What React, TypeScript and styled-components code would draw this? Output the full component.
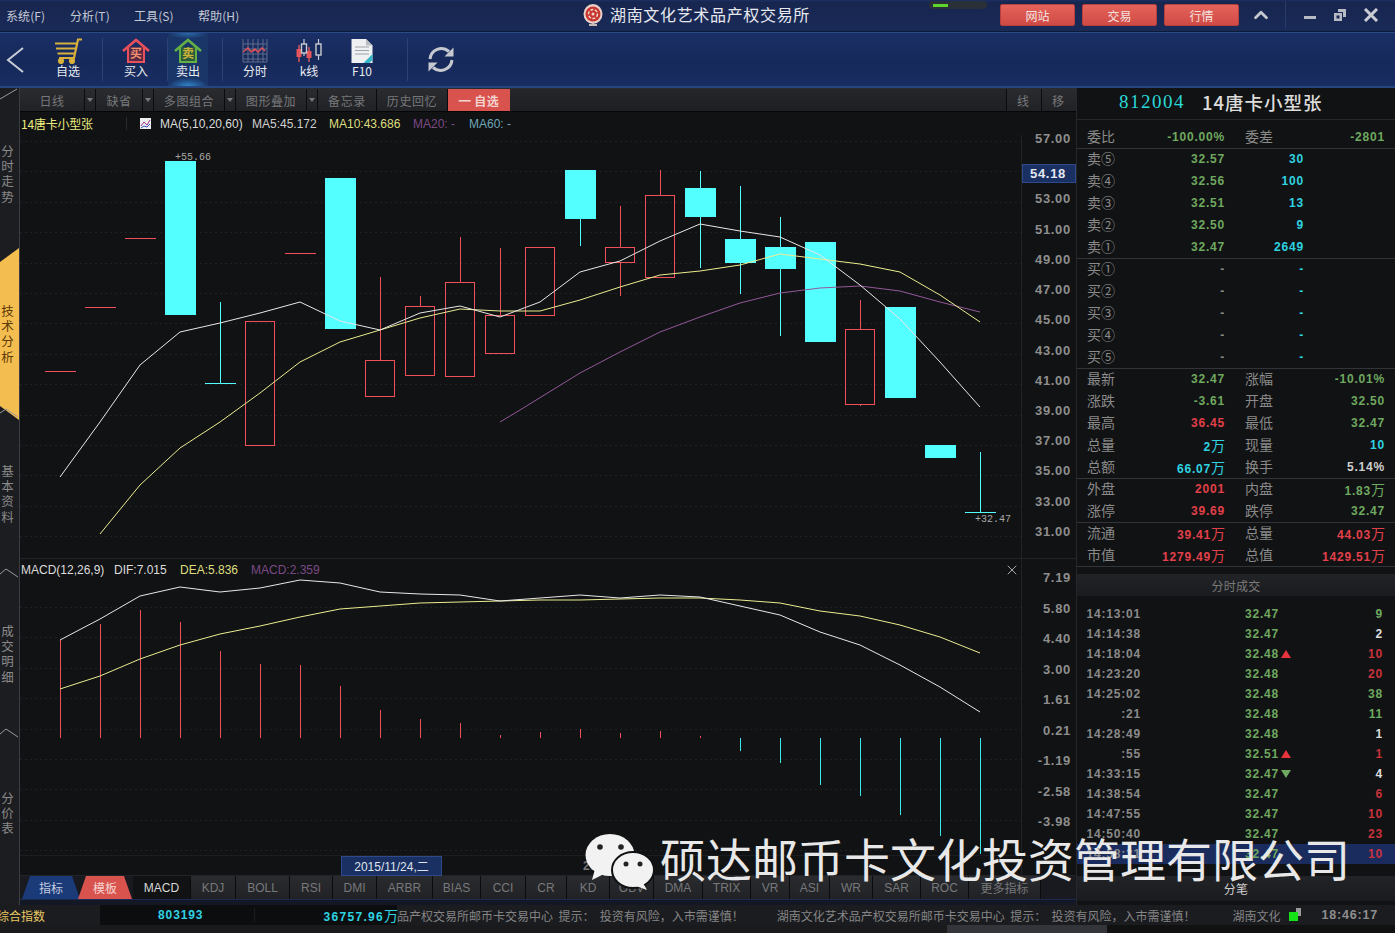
import React from "react";
import styled, { createGlobalStyle } from "styled-components";
import { X as XIcon, ChevronUp } from "lucide-react";

const CJK = `"Noto Sans CJK SC", "Liberation Sans", sans-serif`;
const LATIN = `"Liberation Sans", "Noto Sans CJK SC", sans-serif`;
const MONO = `"Liberation Mono", "Noto Sans CJK SC", monospace`;
const GREEN = "#6fa860";
const RED = "#e2404a";
const CYAN = "#2fd3e2";

const Global = createGlobalStyle`
  html, body { margin: 0; padding: 0; background: #111; overflow: hidden; }
  * { box-sizing: border-box; }
`;

const Page = styled.div`
  position: relative;
  width: 1395px;
  height: 933px;
  overflow: hidden;
  display: flex;
  flex-direction: column;
  background: #111213;
  font-family: ${CJK};
`;

/* ---------- title bar ---------- */
const TitleBar = styled.header`
  height: 32px;
  flex: none;
  display: flex;
  align-items: center;
  padding-bottom: 1px;
  background: linear-gradient(#1c2f63 0, #17264f 8%, #1a2a58 100%);
  border-bottom: 1px solid #0c1a3a;
  position: relative;
`;
const Menu = styled.nav`
  width: 583px;
  flex: none;
  display: flex;
  padding-left: 6px;
  gap: 23px;
`;
const MenuItem = styled.span`
  font-size: 12px;
  color: #c4c9d4;
  width: 41px;
  white-space: nowrap;
  letter-spacing: 0.1px;
`;
const BrandLogo = styled.svg`
  width: 20px;
  height: 24px;
  flex: none;
`;
const BrandTitle = styled.h1`
  margin: 0 0 2px 7px;
  font-size: 16px;
  font-weight: 400;
  letter-spacing: 0.67px;
  color: #e6e8ee;
  white-space: nowrap;
  width: 319px;
`;
const Meter = styled.div`
  position: absolute;
  left: 929px;
  top: 1px;
  width: 58px;
  height: 8px;
  border-radius: 4px;
  background: #2a3038;
  padding: 2.5px 4px;
`;
const MeterFill = styled.div`
  width: 15px;
  height: 3px;
  background: #5fd62e;
`;
const WebButtons = styled.div`
  margin-left: 71px;
  display: flex;
  gap: 7px;
`;
const RedButton = styled.button`
  width: 75px;
  height: 22px;
  border: 1px solid #b5403d;
  border-radius: 2px;
  padding: 0;
  background: linear-gradient(#e5635a, #cf4a45);
  color: #f3e3e0;
  font-family: ${CJK};
  font-size: 12px;
`;
const WindowControls = styled.div`
  display: flex;
  align-items: center;
  gap: 15px;
  margin-left: 11px;
  color: #c4c8cf;
`;
const ControlDivider = styled.span`
  width: 1px;
  height: 28px;
  background: #2a3a68;
  margin: 0 2px 0 -2px;
`;

/* ---------- tool bar ---------- */
const ToolBar = styled.div`
  height: 56px;
  flex: none;
  display: flex;
  align-items: stretch;
  background: linear-gradient(#1a2f66 0, #16295a 55%, #182d62 100%);
  border-top: 1px solid #2a4a88;
  border-bottom: 2px solid #27467f;
`;
const BackButton = styled.div`
  width: 45px;
  flex: none;
  display: flex;
  align-items: center;
  padding: 0 0 0 6px;
`;
const ToolItem = styled.div<{ $w: number; $active?: boolean }>`
  width: ${(p) => p.$w}px;
  flex: none;
  display: flex;
  flex-direction: column;
  align-items: center;
  justify-content: flex-start;
  padding-top: 5px;
  color: #e8eaf0;
  font-size: 12px;
  line-height: 14px;
  background: ${(p) =>
    p.$active
      ? "radial-gradient(ellipse 20px 8px at 50% 100%, #2f86c8 0, transparent 100%), radial-gradient(ellipse 20px 6px at 50% 0, #2a6aa8 0, transparent 100%), #1a3568"
      : "transparent"};
`;
const ToolIcon = styled.svg`
  display: block;
  height: 26px;
  width: 30px;
  flex: none;
`;
const ToolSep = styled.div<{ $ml?: number; $mr?: number }>`
  width: 1px;
  flex: none;
  margin: 5px ${(p) => p.$mr ?? 0}px 5px ${(p) => p.$ml ?? 0}px;
  background: #2b4275;
`;
const RefreshWrap = styled.div`
  width: 66px;
  flex: none;
  display: flex;
  align-items: center;
  justify-content: center;
`;

/* ---------- body ---------- */
const Body = styled.div`
  height: 817px;
  flex: none;
  display: flex;
`;
const Rail = styled.aside`
  width: 20px;
  flex: none;
  padding-top: 7px;
  background: #1c1d21;
  border-right: 1px solid #3c3d42;
  display: flex;
  flex-direction: column;
`;
const RailSection = styled.div<{ $active?: boolean }>`
  position: relative;
  height: 160px;
  flex: none;
  display: flex;
  align-items: center;
  font-size: 12.5px;
  color: ${(p) => (p.$active ? "#5c3a06" : "#8a8a8a")};
  &::before {
    content: "";
    display: ${(p) => (p.$active ? "block" : "none")};
    position: absolute;
    left: 0;
    right: 0;
    top: -7px;
    bottom: -5px;
    background: #f4bd50;
    clip-path: polygon(0 14px, 100% 0, 100% 100%, 0 calc(100% - 14px));
  }
`;
const RailText = styled.span`
  position: relative;
  width: 14px;
  writing-mode: vertical-rl;
  letter-spacing: 2.7px;
  line-height: 14px;
`;
const Notch = styled.svg<{ $top: number }>`
  position: absolute;
  left: 0;
  top: ${(p) => p.$top}px;
  width: 19px;
  height: 14px;
`;

const Center = styled.main`
  width: 1057px;
  flex: none;
  display: flex;
  flex-direction: column;
  border-right: 1px solid #26272a;
`;
const TabBar = styled.div`
  height: 24px;
  flex: none;
  display: flex;
  background: #202124;
  border-top: 1px solid #2a2b2e;
  border-bottom: 1px solid #060606;
`;
const TopTab = styled.div<{ $w: number }>`
  width: ${(p) => p.$w}px;
  flex: none;
  display: flex;
  align-items: center;
  justify-content: center;
  font-size: 12px;
  color: #77787b;
  letter-spacing: 0.6px;
  background: linear-gradient(#2a2b2e, #212225);
  border-right: 1px solid #0b0b0c;
`;
const TabDrop = styled.div`
  width: 11px;
  flex: none;
  display: flex;
  align-items: center;
  justify-content: center;
  background: linear-gradient(#2a2b2e, #212225);
  border-right: 1px solid #0b0b0c;
  &::after {
    content: "";
    border-top: 4px solid #77787b;
    border-left: 3px solid transparent;
    border-right: 3px solid transparent;
  }
`;
const SelfTab = styled.div`
  width: 62px;
  flex: none;
  display: flex;
  align-items: center;
  justify-content: center;
  font-size: 12px;
  font-weight: 700;
  color: #f3d4d0;
  letter-spacing: 0.5px;
  background: #d9534e;
`;
const TabFiller = styled.div`
  flex: 1;
  background: linear-gradient(#252629, #1e1f22);
`;
const SideTab = styled.div<{ $w: number }>`
  width: ${(p) => p.$w}px;
  flex: none;
  display: flex;
  align-items: center;
  justify-content: center;
  font-size: 12px;
  padding-right: 2px;
  color: #77787b;
  background: linear-gradient(#2a2b2e, #212225);
  border-left: 1px solid #0b0b0c;
`;

const LegendRow = styled.div`
  height: 23px;
  flex: none;
  display: flex;
  align-items: center;
  font-family: ${LATIN};
  font-size: 12px;
`;
const StockTag = styled.span`
  margin-left: 1px;
  width: 106px;
  color: #ecec80;
  white-space: nowrap;
  border-right: 1px solid #2a2a2a;
  line-height: 13px;
  letter-spacing: -0.2px;
  font-family: ${CJK};
`;
const LegendIcon = styled.svg`
  margin-left: 13px;
  width: 11px;
  height: 11px;
  margin-right: 9px;
`;
const LegendText = styled.span<{ $c: string; $w: number }>`
  color: ${(p) => p.$c};
  width: ${(p) => p.$w}px;
  flex: none;
  white-space: nowrap;
`;
const Pane = styled.section<{ $h: number }>`
  height: ${(p) => p.$h}px;
  flex: none;
  display: flex;
  border-bottom: 1px solid #222326;
`;
const PlotColumn = styled.div`
  width: 1001px;
  flex: none;
  display: flex;
  flex-direction: column;
`;
const Plot = styled.svg<{ $h: number }>`
  display: block;
  width: 1001px;
  height: ${(p) => p.$h}px;
  flex: none;
`;
const Axis = styled.div<{ $pt: number; $pb: number }>`
  position: relative;
  width: 54px;
  flex: none;
  border-left: 1px solid #222326;
  padding: ${(p) => p.$pt}px 4px ${(p) => p.$pb}px 0;
  display: flex;
  flex-direction: column;
  justify-content: space-between;
  align-items: flex-end;
  font-family: ${LATIN};
  font-weight: 700;
  font-size: 13px;
  letter-spacing: 0.7px;
  line-height: 8px;
  color: #8e8e8e;
`;
const PriceTag = styled.span`
  position: absolute;
  left: 0;
  top: 29px;
  width: 54px;
  height: 19px;
  display: flex;
  align-items: center;
  justify-content: center;
  padding-right: 2px;
  background: #1a2f62;
  border: 1px solid #2e4a8a;
  color: #e6e8f0;
`;
const MacdLegend = styled.div`
  height: 20px;
  flex: none;
  display: flex;
  align-items: center;
  font-family: ${LATIN};
  font-size: 12px;
  color: #ddd;
  padding: 2px 0 0 1px;
`;
const CloseBox = styled.span`
  margin-left: auto;
  margin-right: 1px;
  display: flex;
  color: #b5b5b5;
`;
const DateRow = styled.div`
  height: 20px;
  flex: none;
  position: relative;
  display: flex;
  align-items: center;
  font-family: ${LATIN};
  font-weight: 700;
  font-size: 12px;
  color: #777;
  border-top: 1px solid #1c1d20;
`;
const DateBox = styled.span`
  margin-left: 321px;
  width: 101px;
  height: 20px;
  display: flex;
  align-items: center;
  justify-content: center;
  background: #1a2f62;
  border: 1px solid #2e4a8a;
  color: #dfe3ec;
  font-family: ${LATIN};
  font-weight: 400;
`;
const DateLabel = styled.span`
  margin-left: 141px;
`;
const IndicatorBar = styled.div`
  height: 24px;
  flex: none;
  display: flex;
  padding-left: 2px;
  background: #181a20;
  border-bottom: 1px solid #1b2a52;
`;
const Trapezoid = styled.div<{ $bg: string; $c: string; $w: number; $ml?: number }>`
  width: ${(p) => p.$w}px;
  margin-left: ${(p) => p.$ml ?? 0}px;
  margin-right: ${(p) => (p.$ml ? 1 : 0)}px;
  flex: none;
  display: flex;
  align-items: center;
  justify-content: center;
  font-size: 12px;
  color: ${(p) => p.$c};
  background: ${(p) => p.$bg};
  clip-path: polygon(8px 0, calc(100% - 8px) 0, 100% 100%, 0 100%);
`;
const IndicatorTab = styled.div<{ $w: number; $active?: boolean }>`
  width: ${(p) => p.$w}px;
  flex: none;
  display: flex;
  align-items: center;
  justify-content: center;
  font-family: ${LATIN};
  font-size: 12px;
  color: ${(p) => (p.$active ? "#d8d8d8" : "#77787b")};
  background: ${(p) => (p.$active ? "#111213" : "linear-gradient(#2a2b2e, #212225)")};
  border-right: 1px solid #0b0b0c;
`;
const BarGap = styled.div`
  height: 5px;
  flex: none;
  background: #141824;
`;

/* ---------- side panel ---------- */
const Side = styled.aside`
  width: 318px;
  flex: none;
  display: flex;
  flex-direction: column;
  background: #111213;
`;
const StockHeader = styled.div`
  height: 32px;
  flex: none;
  display: flex;
  align-items: center;
  padding: 0 0 4px 42px;
  border-bottom: 1px solid #26272a;
  margin-bottom: 6px;
`;
const StockCode = styled.span`
  font-family: "Liberation Serif", serif;
  font-size: 19px;
  letter-spacing: 1.5px;
  color: #2bd8d8;
  margin-right: 17px;
`;
const StockName = styled.span`
  font-size: 18.5px;
  letter-spacing: 1px;
  font-weight: 500;
  color: #dcdcdc;
  white-space: nowrap;
`;
const Group = styled.div`
  box-shadow: 0 1px 0 #333437;
  &:last-of-type {
    box-shadow: none;
  }
`;
const Quote = styled.div`
  height: 22px;
  display: grid;
  grid-template-columns: 138px 140px;
  column-gap: 20px;
  padding-left: 10px;
  align-items: center;
  font-family: ${LATIN};
  font-weight: 700;
  font-size: 12px;
  letter-spacing: 0.8px;
`;
const QuoteCell = styled.div`
  display: flex;
  justify-content: space-between;
  align-items: center;
  white-space: nowrap;
`;
const Label = styled.span`
  font-family: ${CJK};
  font-weight: 400;
  font-size: 14px;
  letter-spacing: 0;
  color: #8a8a8a;
  line-height: 16px;
  margin-bottom: 2px;
`;
const Val = styled.span<{ $c: string }>`
  color: ${(p) => p.$c};
`;
const BookCell = styled.div`
  width: 59px;
  text-align: right;
`;
const Unit = styled.span`
  font-family: ${CJK};
  font-weight: 400;
  font-size: 14px;
  letter-spacing: 0;
`;
const SideBar = styled.div<{ $mt: number; $h: number; $c: string }>`
  height: ${(p) => p.$h}px;
  margin-top: ${(p) => p.$mt}px;
  flex: none;
  display: flex;
  align-items: center;
  justify-content: center;
  background: linear-gradient(#222326, #1a1b1e);
  color: ${(p) => p.$c};
  font-size: 12px;
  letter-spacing: 0.2px;
`;
const Trades = styled.div`
  padding-top: 8px;
`;
const Trade = styled.div<{ $hi?: boolean }>`
  height: 20px;
  display: grid;
  grid-template-columns: 64px 168px 74px;
  align-items: center;
  font-family: ${LATIN};
  font-weight: 700;
  font-size: 12px;
  letter-spacing: 0.8px;
  background: ${(p) => (p.$hi ? "#1a2c5e" : "transparent")};
`;
const TradeTime = styled.span`
  text-align: right;
  color: #8a8a8a;
`;
const TradePrice = styled.span`
  padding-left: 104px;
  color: ${GREEN};
  display: flex;
  align-items: center;
  gap: 2px;
  white-space: nowrap;
`;
const Arrow = styled.i<{ $up: boolean }>`
  width: 0;
  height: 0;
  border-left: 5px solid transparent;
  border-right: 5px solid transparent;
  border-${(p) => (p.$up ? "bottom" : "top")}: 8px solid ${(p) => (p.$up ? "#e8333c" : GREEN)};
`;
const TradeQty = styled.span<{ $c: string }>`
  text-align: right;
  color: ${(p) => p.$c};
`;

/* ---------- status bar ---------- */
const StatusBar = styled.footer`
  height: 20px;
  flex: none;
  display: flex;
  align-items: center;
  background: #1b1c20;
  font-size: 12px;
  color: #858585;
  white-space: nowrap;
`;
const IndexName = styled.span`
  width: 100px;
  flex: none;
  margin-left: -3px;
  margin-right: 3px;
  color: #e8c860;
`;
const Pill = styled.div`
  width: 297px;
  height: 20px;
  flex: none;
  display: flex;
  align-items: center;
  background: #0c0d0f;
  color: ${CYAN};
  font-family: ${LATIN};
  font-weight: 700;
  font-size: 12px;
  letter-spacing: 0.9px;
`;
const PillNum = styled.span`
  margin-left: 58px;
  width: 97px;
  border-right: 1px solid #1c1d20;
`;
const PillAmount = styled.span`
  margin-left: auto;
  margin-right: -1px;
  letter-spacing: 1.3px;
`;
const Ticker = styled.span`
  white-space: pre;
  flex: none;
`;
const TickerGap = styled.span`
  width: 33px;
  flex: none;
`;
const StatusEnd = styled.div`
  margin-left: auto;
  display: flex;
  align-items: center;
  padding-right: 17px;
`;
const SignalIcon = styled.svg`
  width: 12px;
  height: 14px;
  margin: 0 21px 0 8px;
`;
const Clock = styled.span`
  font-family: ${LATIN};
  font-weight: 700;
  font-size: 12.5px;
  color: #8e8e8e;
  letter-spacing: 0.8px;
`;
const BottomStrip = styled.div`
  flex: 1;
  background: linear-gradient(90deg, #1a1a1c 0, #1a1a1c 947px, #34353a 947px, #34353a 1107px, #111 1107px);
`;

/* ---------- watermark ---------- */
const Watermark = styled.div`
  position: absolute;
  left: 585px;
  top: 833px;
  display: flex;
  align-items: flex-start;
  gap: 6px;
  pointer-events: none;
`;
const WechatMark = styled.svg`
  width: 69px;
  height: 58px;
  flex: none;
`;
const WatermarkText = styled.span`
  font-family: ${CJK};
  font-size: 46px;
  line-height: 58px;
  margin-top: -5px;
  color: #e8e8e8;
  white-space: nowrap;
  font-weight: 400;
`;

/* ---------- data ---------- */
type Candle = { x: number; top?: number; bot?: number; hi?: number; lo?: number; up: boolean };
const candles: Candle[] = [
  { x: 60, hi: 371, lo: 371, up: true },
  { x: 100, hi: 307, lo: 307, up: true },
  { x: 140, hi: 238, lo: 238, up: true },
  { x: 180, top: 161, bot: 315, up: false },
  { x: 220, hi: 302, lo: 383, up: false },
  { x: 260, top: 321, bot: 445, up: true },
  { x: 300, hi: 253, lo: 253, up: true },
  { x: 340, top: 178, bot: 329, up: false },
  { x: 380, top: 360, bot: 396, hi: 277, up: true },
  { x: 420, top: 306, bot: 375, hi: 296, up: true },
  { x: 460, top: 282, bot: 376, hi: 237, up: true },
  { x: 500, top: 315, bot: 353, hi: 248, up: true },
  { x: 540, top: 247, bot: 315, up: true },
  { x: 580, top: 170, bot: 219, lo: 246, up: false },
  { x: 620, top: 247, bot: 262, hi: 206, lo: 296, up: true },
  { x: 660, top: 195, bot: 277, hi: 170, up: true },
  { x: 700, top: 188, bot: 217, hi: 171, lo: 268, up: false },
  { x: 740, top: 239, bot: 263, hi: 186, lo: 294, up: false },
  { x: 780, top: 247, bot: 269, hi: 217, lo: 336, up: false },
  { x: 820, top: 242, bot: 342, up: false },
  { x: 860, top: 329, bot: 404, hi: 300, lo: 406, up: true },
  { x: 900, top: 307, bot: 398, up: false },
  { x: 940, top: 445, bot: 458, up: false },
  { x: 980, hi: 452, lo: 512, up: false },
];
const MA5 = "60,477 100,422 140,365 180,332 220,323 260,313 300,302 340,321 380,330 420,313 460,306 500,317 540,302 580,272 620,261 660,241 700,224 740,231 780,237 820,255 860,285 900,319 940,362 980,407";
const MA10 = "100,534 140,485 180,448 220,422 260,393 300,362 340,342 380,330 420,318 460,309 500,311 540,311 580,300 620,287 660,275 700,271 740,265 780,254 820,259 860,264 900,272 940,295 980,322";
const MA20 = "500,422 520,410 580,373 620,352 660,332 700,317 740,303 780,293 820,288 860,286 900,291 940,302 980,312";
const DIF = "60,641 100,620 140,597 180,588 220,593 260,589 300,581 340,584 380,593 420,595 460,596 500,602 540,599 580,596 620,599 660,596 700,598 740,607 780,616 820,633 860,646 900,666 940,688 980,713";
const DEA = "60,690 100,677 140,660 180,646 220,635 260,627 300,618 340,610 380,607 420,604 460,603 500,602 540,601 580,601 620,600 660,599 700,599 740,601 780,604 820,612 860,617 900,626 940,638 980,654";
const macdBars: [number, number][] = [
  [60, 641], [100, 625], [140, 611], [180, 623], [220, 652], [260, 665], [300, 666], [340, 687],
  [380, 711], [420, 720], [460, 724], [500, 736], [540, 733], [580, 730], [620, 734], [660, 732],
  [700, 737], [740, 752], [780, 764], [820, 786], [860, 797], [900, 816], [940, 837], [980, 855],
];
const priceAxis = ["57.00", "55.00", "53.00", "51.00", "49.00", "47.00", "45.00", "43.00", "41.00", "39.00", "37.00", "35.00", "33.00", "31.00"];
const macdAxis = ["7.19", "5.80", "4.40", "3.00", "1.61", "0.21", "-1.19", "-2.58", "-3.98"];
const topTabs: [string, number, boolean][] = [
  ["日线", 65, true], ["缺省", 47, true], ["多图组合", 71, true], ["图形叠加", 71, true], ["备忘录", 59, false], ["历史回忆", 71, false],
];
const indicators: [string, number][] = [
  ["KDJ", 45], ["BOLL", 54], ["RSI", 43], ["DMI", 44], ["ARBR", 56], ["BIAS", 48], ["CCI", 45], ["CR", 41], ["KD", 43], ["OBV", 44],
  ["DMA", 49], ["TRIX", 48], ["VR", 39], ["ASI", 40], ["WR", 43], ["SAR", 48], ["ROC", 48], ["更多指标", 72],
];
const asks: [string, string, string][] = [
  ["卖⑤", "32.57", "30"], ["卖④", "32.56", "100"], ["卖③", "32.51", "13"], ["卖②", "32.50", "9"], ["卖①", "32.47", "2649"],
];
const bids = ["买①", "买②", "买③", "买④", "买⑤"];
type Q = [string, string, string, string?];
const stats1: [Q, Q][] = [
  [["最新", "32.47", GREEN], ["涨幅", "-10.01%", GREEN]],
  [["涨跌", "-3.61", GREEN], ["开盘", "32.50", GREEN]],
  [["最高", "36.45", RED], ["最低", "32.47", GREEN]],
  [["总量", "2", CYAN, "万"], ["现量", "10", CYAN]],
  [["总额", "66.07", CYAN, "万"], ["换手", "5.14%", "#cfcfcf"]],
];
const stats2: [Q, Q][] = [
  [["外盘", "2001", RED], ["内盘", "1.83", GREEN, "万"]],
  [["涨停", "39.69", RED], ["跌停", "32.47", GREEN]],
];
const stats3: [Q, Q][] = [
  [["流通", "39.41", RED, "万"], ["总量", "44.03", RED, "万"]],
  [["市值", "1279.49", RED, "万"], ["总值", "1429.51", RED, "万"]],
];
type T = [string, string, "up" | "down" | "", string, string];
const trades: T[] = [
  ["14:13:01", "32.47", "", "9", GREEN],
  ["14:14:38", "32.47", "", "2", "#dcdcdc"],
  ["14:18:04", "32.48", "up", "10", "#c8333c"],
  ["14:23:20", "32.48", "", "20", "#c8333c"],
  ["14:25:02", "32.48", "", "38", GREEN],
  [":21", "32.48", "", "11", GREEN],
  ["14:28:49", "32.48", "", "1", "#dcdcdc"],
  [":55", "32.51", "up", "1", "#c8333c"],
  ["14:33:15", "32.47", "down", "4", "#dcdcdc"],
  ["14:38:54", "32.47", "", "6", "#c8333c"],
  ["14:47:55", "32.47", "", "10", "#c8333c"],
  ["14:50:40", "32.47", "", "23", "#c8333c"],
  ["14:58:31", "32.47", "", "10", "#c8333c"],
];

const CANDLE_RED = "#f0505a";
const CANDLE_CYAN = "#54ffff";

function GridLines({ from, to }: { from: number; to: number }) {
  const ys: number[] = [];
  for (let y = from; y < to; y += 30.4) ys.push(Math.round(y) + 0.5);
  return (
    <g stroke="#202124" strokeDasharray="2 3">
      {ys.map((y) => (
        <line key={y} x1={20} x2={1021} y1={y} y2={y} />
      ))}
    </g>
  );
}

function CandleMark({ c }: { c: Candle }) {
  const color = c.up ? CANDLE_RED : CANDLE_CYAN;
  const cx = c.x + 0.5;
  const hasBody = c.top !== undefined && c.bot !== undefined;
  return (
    <g shapeRendering="crispEdges">
      {c.hi !== undefined && hasBody && <line x1={cx} x2={cx} y1={c.hi} y2={c.top} stroke={color} />}
      {c.lo !== undefined && hasBody && <line x1={cx} x2={cx} y1={c.bot} y2={c.lo} stroke={color} />}
      {!hasBody && c.hi !== c.lo && <line x1={cx} x2={cx} y1={c.hi} y2={c.lo} stroke={color} />}
      {!hasBody && <rect x={c.x - 15} y={c.lo} width={31} height={1} fill={color} />}
      {hasBody &&
        (c.up ? (
          <rect x={c.x - 14.5} y={c.top! + 0.5} width={29} height={c.bot! - c.top!} fill="none" stroke={color} />
        ) : (
          <rect x={c.x - 15} y={c.top} width={31} height={c.bot! - c.top!} fill={color} />
        ))}
    </g>
  );
}

function CartIcon() {
  return (
    <ToolIcon viewBox="0 0 30 26" fill="none" stroke="#d8b03c" strokeWidth="2.2">
      <path d="M29 1.500h-4L21 20H6" />
      <path d="M2 5.500h22M3 10.500h20M4.500 15.500h17" />
      <circle cx="8" cy="23" r="2" fill="#d8b03c" />
      <circle cx="19" cy="23" r="2" fill="#d8b03c" />
    </ToolIcon>
  );
}
function HouseIcon({ stroke, fill, char, text }: { stroke: string; fill: string; char: string; text: string }) {
  return (
    <ToolIcon viewBox="0 0 30 26" fill="none">
      <path d="M7 9v15h16V9" fill={fill} stroke={stroke} strokeWidth="2" />
      <path d="M2 13 15 2l13 11" stroke={stroke} strokeWidth="2.6" />
      <text x="15" y="20" textAnchor="middle" fontSize="12" fontWeight="700" fill={text} fontFamily={CJK}>
        {char}
      </text>
    </ToolIcon>
  );
}
function MinuteIcon() {
  return (
    <ToolIcon viewBox="0 0 30 26" fill="none">
      <path
        d="M3 1v23h24M3 6h24M3 11h24M3 16h24M3 21h24M8 1v23M13 1v23M18 1v23M23 1v23M27 1v23"
        stroke="#5e6c8c"
        strokeWidth="1"
      />
      <path d="M3 14l5-4 3 4 4-3 3 3 4-4 3 3" stroke="#d9505a" strokeWidth="1.600" />
    </ToolIcon>
  );
}
function KLineIcon() {
  return (
    <ToolIcon viewBox="0 0 30 26" fill="none">
      <path d="M5 7v17M15 9v15" stroke="#e5555c" strokeWidth="1.400" />
      <rect x="2.500" y="11" width="5" height="8" fill="#e5555c" />
      <rect x="12.500" y="13" width="5" height="7" fill="#e5555c" />
      <path d="M10 1v17" stroke="#c9ccd2" strokeWidth="1.200" />
      <rect x="7.500" y="6" width="5" height="9" fill="#16295a" stroke="#c9ccd2" strokeWidth="1.400" />
      <path d="M24.500 1v21" stroke="#c9ccd2" strokeWidth="1.200" />
      <rect x="22" y="6" width="5" height="11" fill="#16295a" stroke="#c9ccd2" strokeWidth="1.400" />
    </ToolIcon>
  );
}
function DocIcon() {
  return (
    <ToolIcon viewBox="0 0 30 26" fill="none">
      <path d="M4.500 1H19l6.500 6.500V25h-21z" fill="#eef0f2" />
      <path d="M19 1l6.500 6.500H19z" fill="#b8bcc2" />
      <path d="M8 9h14M8 12.500h14M8 16h14" stroke="#9ea3aa" strokeWidth="1.200" />
      <path d="M25.500 16v6l-3 3h-6z" fill="#35b6c6" />
    </ToolIcon>
  );
}

function Cell({ q }: { q: Q }) {
  return (
    <QuoteCell>
      <Label>{q[0]}</Label>
      <Val $c={q[2]}>
        {q[1]}
        {q[3] && <Unit>{q[3]}</Unit>}
      </Val>
    </QuoteCell>
  );
}

const rail: { t: string; active?: boolean; notch: string }[] = [
  { t: "分时走势", notch: "M0 11 17 1" },
  { t: "技术分析", active: true, notch: "M0 5 6 1 18 9" },
  { t: "基本资料", notch: "M0 5 6 1 18 9" },
  { t: "成交明细", notch: "M0 6 6 1 18 9" },
  { t: "分价表", notch: "M0 6 6 1 18 9" },
];

export default function App() {
  return (
    <Page>
      <Global />
      <TitleBar>
        <Menu>
          {["系统(F)", "分析(T)", "工具(S)", "帮助(H)"].map((m) => (
            <MenuItem key={m}>{m}</MenuItem>
          ))}
        </Menu>
        <BrandLogo viewBox="0 0 20 24">
          <ellipse cx="10" cy="11" rx="9.500" ry="10" fill="#e8cfc8" />
          <circle cx="10" cy="11" r="7.500" fill="#c8342e" />
          <circle cx="10" cy="11" r="4.500" fill="none" stroke="#f0d8d0" strokeWidth="1.500" strokeDasharray="3 1.500" />
          <circle cx="10" cy="11" r="1.500" fill="#f0d8d0" />
          <rect x="6" y="21" width="8" height="2" fill="#c9b9b4" />
        </BrandLogo>
        <BrandTitle>湖南文化艺术品产权交易所</BrandTitle>
        <Meter>
          <MeterFill />
        </Meter>
        <WebButtons>
          <RedButton>网站</RedButton>
          <RedButton>交易</RedButton>
          <RedButton>行情</RedButton>
        </WebButtons>
        <WindowControls>
          <ChevronUp size={22} strokeWidth={3} />
          <ControlDivider />
          <svg width="14" height="14" viewBox="0 0 14 14">
            <rect x="1" y="8" width="12" height="3" fill="#b6bac2" />
          </svg>
          <svg width="16" height="14" viewBox="0 0 16 14">
            <path d="M6 1h8v8h-3V4H6zM2 5h8v8H2zM4.500 7.500v3h3v-3z" fill="#b6bac2" fillRule="evenodd" />
          </svg>
          <svg width="16" height="14" viewBox="0 0 16 14">
            <path d="M2 1l12 12M14 1 2 13" stroke="#c9ccd3" strokeWidth="3" />
          </svg>
        </WindowControls>
      </TitleBar>

      <ToolBar>
        <BackButton>
          <svg width="18" height="28" viewBox="0 0 18 28" fill="none">
            <path d="M17 2 2 14l15 12" stroke="#c7ccd6" strokeWidth="2" />
          </svg>
        </BackButton>
        <ToolItem $w={46}>
          <CartIcon />
          自选
        </ToolItem>
        <ToolSep $ml={11} $mr={10} />
        <ToolItem $w={46}>
          <HouseIcon stroke="#e8505c" fill="#5a2a44" char="买" text="#f09070" />
          买入
        </ToolItem>
        <ToolSep $ml={8} $mr={0} />
        <ToolItem $w={40} $active>
          <HouseIcon stroke="#62b046" fill="#2a5a3a" char="卖" text="#c9b23a" />
          卖出
        </ToolItem>
        <ToolSep $ml={14} $mr={10} />
        <ToolItem $w={44}>
          <MinuteIcon />
          分时
        </ToolItem>
        <ToolItem $w={64}>
          <KLineIcon />
          k线
        </ToolItem>
        <ToolItem $w={42}>
          <DocIcon />
          F10
        </ToolItem>
        <ToolSep $ml={24} />
        <RefreshWrap>
          <svg width="26" height="27" viewBox="0 0 26 27" fill="none">
            <path d="M2 13A11.500 11.500 0 0 1 21 5.500" stroke="#c6cad0" strokeWidth="3" />
            <path d="M25.500 1.500v9h-9z" fill="#c6cad0" />
            <path d="M24 14A11.500 11.500 0 0 1 5 21.500" stroke="#c6cad0" strokeWidth="3" />
            <path d="M.5 25.500v-9h9z" fill="#c6cad0" />
          </svg>
        </RefreshWrap>
      </ToolBar>

      <Body>
        <Rail>
          {rail.map((r) => (
            <RailSection key={r.t} $active={r.active}>
              {!r.active && (
                <Notch $top={-7} viewBox="0 0 19 14" fill="none">
                  <path d={r.notch} stroke="#9a9a9a" />
                </Notch>
              )}
              <RailText>{r.t}</RailText>
            </RailSection>
          ))}
        </Rail>

        <Center>
          <TabBar>
            {topTabs.map(([name, w, drop]) => (
              <React.Fragment key={name}>
                <TopTab $w={w}>{name}</TopTab>
                {drop && <TabDrop />}
              </React.Fragment>
            ))}
            <SelfTab>━ 自选</SelfTab>
            <TabFiller />
            <SideTab $w={35}>线</SideTab>
            <SideTab $w={35}>移</SideTab>
          </TabBar>

          <LegendRow>
            <StockTag>14唐卡小型张</StockTag>
            <LegendIcon viewBox="0 0 11 11">
              <rect width="11" height="11" fill="#eee" />
              <path d="M1 8l3-4 3 3 3-5" stroke="#a03090" fill="none" />
              <path d="M1 10l3-2 3 1 3-3" stroke="#3050c0" fill="none" />
            </LegendIcon>
            <LegendText $c="#dcdcdc" $w={92}>MA(5,10,20,60)</LegendText>
            <LegendText $c="#cfcfcf" $w={77}>MA5:45.172</LegendText>
            <LegendText $c="#dede80" $w={84}>MA10:43.686</LegendText>
            <LegendText $c="#7b4a86" $w={56}>MA20: -</LegendText>
            <LegendText $c="#6fa6b8" $w={60}>MA60: -</LegendText>
          </LegendRow>

          <Pane $h={424}>
            <Plot $h={424} viewBox="20 135 1001 424" fill="none">
              <GridLines from={141} to={559} />
              {candles.map((c) => (
                <CandleMark key={c.x} c={c} />
              ))}
              <polyline points={MA20} stroke="#94589a" />
              <polyline points={MA10} stroke="#ecec90" />
              <polyline points={MA5} stroke="#e8e8e8" />
              <text x="175" y="160" fontFamily={MONO} fontSize="10" fill="#a8a8a8">+55.66</text>
              <text x="975" y="522" fontFamily={MONO} fontSize="10" fill="#a8a8a8">+32.47</text>
            </Plot>
            <Axis $pt={0} $pb={22}>
              {priceAxis.map((a, i) => (
                <span key={a}>{i === 1 ? "\u00a0" : a}</span>
              ))}
              <PriceTag>54.18</PriceTag>
            </Axis>
          </Pane>

          <Pane $h={317}>
            <PlotColumn>
              <MacdLegend>
                <LegendText $c="#dcdcdc" $w={93}>MACD(12,26,9)</LegendText>
                <LegendText $c="#dcdcdc" $w={66}>DIF:7.015</LegendText>
                <LegendText $c="#dede80" $w={71}>DEA:5.836</LegendText>
                <LegendText $c="#7b4a86" $w={80}>MACD:2.359</LegendText>
                <CloseBox>
                  <XIcon size={16} strokeWidth={1.4} />
                </CloseBox>
              </MacdLegend>
              <Plot $h={276} viewBox="20 580 1001 276" fill="none">
                <GridLines from={608} to={856} />
                {macdBars.map(([x, y]) => (
                  <line
                    key={x}
                    shapeRendering="crispEdges"
                    x1={x + 0.5}
                    x2={x + 0.5}
                    y1={y}
                    y2={739}
                    stroke={y < 739 ? CANDLE_RED : "#3ee8e8"}
                  />
                ))}
                <polyline points={DEA} stroke="#ecec90" />
                <polyline points={DIF} stroke="#e8e8e8" />
              </Plot>
              <DateRow>
                <DateBox>2015/11/24,二</DateBox>
                <DateLabel>2015/12/11</DateLabel>
              </DateRow>
            </PlotColumn>
            <Axis $pt={15} $pb={49}>
              {macdAxis.map((a) => (
                <span key={a}>{a}</span>
              ))}
            </Axis>
          </Pane>

          <IndicatorBar>
            <Trapezoid $bg="#1b3a78" $c="#c4cde0" $w={58}>指标</Trapezoid>
            <Trapezoid $bg="#d9534e" $c="#f5d5d0" $w={54} $ml={-2}>模板</Trapezoid>
            <IndicatorTab $w={58} $active>MACD</IndicatorTab>
            {indicators.map(([n, w]) => (
              <IndicatorTab key={n} $w={w}>{n}</IndicatorTab>
            ))}
          </IndicatorBar>
          <BarGap />
        </Center>

        <Side>
          <StockHeader>
            <StockCode>812004</StockCode>
            <StockName>14唐卡小型张</StockName>
          </StockHeader>
          <Group>
            <Quote>
              <Cell q={["委比", "-100.00%", GREEN]} />
              <Cell q={["委差", "-2801", GREEN]} />
            </Quote>
          </Group>
          <Group>
            {asks.map(([l, p, q]) => (
              <Quote key={l}>
                <Cell q={[l, p, GREEN]} />
                <BookCell><Val $c={CYAN}>{q}</Val></BookCell>
              </Quote>
            ))}
          </Group>
          <Group>
            {bids.map((l) => (
              <Quote key={l}>
                <Cell q={[l, "-", "#8a8a8a"]} />
                <BookCell><Val $c={CYAN}>-</Val></BookCell>
              </Quote>
            ))}
          </Group>
          {[stats1, stats2, stats3].map((g, i) => (
            <Group key={i}>
              {g.map(([a, b]) => (
                <Quote key={a[0]}>
                  <Cell q={a} />
                  <Cell q={b} />
                </Quote>
              ))}
            </Group>
          ))}
          <SideBar $mt={8} $h={22} $c="#7a7a7a">分时成交</SideBar>
          <Trades>
            {trades.map(([t, p, dir, q, c], i) => (
              <Trade key={i} $hi={i === trades.length - 1}>
                <TradeTime>{t}</TradeTime>
                <TradePrice>
                  {p}
                  {dir && <Arrow $up={dir === "up"} />}
                </TradePrice>
                <TradeQty $c={c}>{q}</TradeQty>
              </Trade>
            ))}
          </Trades>
          <SideBar $mt={12} $h={25} $c="#cfcfcf">分笔</SideBar>
        </Side>
      </Body>

      <StatusBar>
        <IndexName>综合指数</IndexName>
        <Pill>
          <PillNum>803193</PillNum>
          <PillAmount>36757.96<Unit>万</Unit></PillAmount>
        </Pill>
        <Ticker>品产权交易所邮币卡交易中心  提示：  投资有风险，入市需谨慎！</Ticker>
        <TickerGap />
        <Ticker>湖南文化艺术品产权交易所邮币卡交易中心  提示：  投资有风险，入市需谨慎！</Ticker>
        <StatusEnd>
          湖南文化
          <SignalIcon viewBox="0 0 12 14">
            <rect x="7" y="0" width="5" height="8" fill="#9a9a9a" />
            <rect x="0" y="4" width="9" height="9" fill="#16e016" />
          </SignalIcon>
          <Clock>18:46:17</Clock>
        </StatusEnd>
      </StatusBar>
      <BottomStrip />

      <Watermark>
        <WechatMark viewBox="0 0 69 58">
          <ellipse cx="25" cy="22" rx="24.500" ry="21" fill="#f2f2f2" />
          <path d="M10 36 7 47l12-6z" fill="#f2f2f2" />
          <circle cx="15" cy="14" r="2.800" fill="#222" />
          <circle cx="36" cy="14" r="2.800" fill="#222" />
          <ellipse cx="48" cy="37" rx="21" ry="18" fill="#f2f2f2" stroke="#111213" strokeWidth="2" />
          <path d="M58 50l4 7-11-4z" fill="#f2f2f2" />
          <circle cx="41" cy="31" r="2.500" fill="#222" />
          <circle cx="55" cy="31" r="2.500" fill="#222" />
        </WechatMark>
        <WatermarkText>硕达邮币卡文化投资管理有限公司</WatermarkText>
      </Watermark>
    </Page>
  );
}
